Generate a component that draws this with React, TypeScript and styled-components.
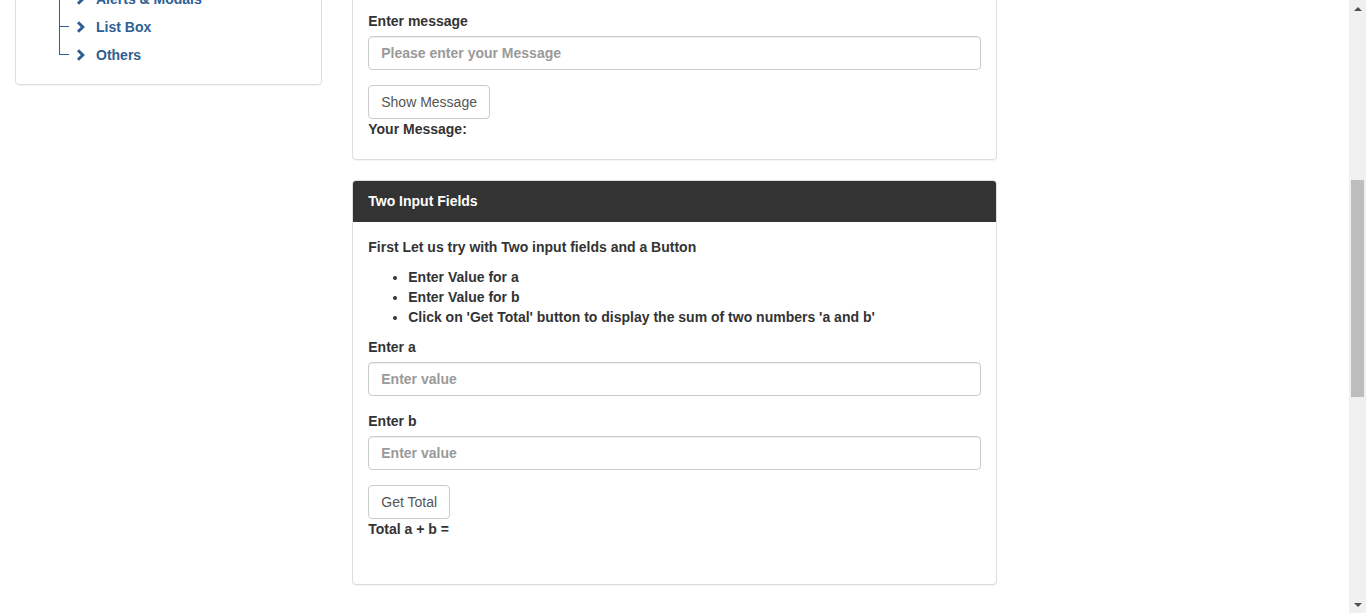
import React from "react";
import styled, { createGlobalStyle } from "styled-components";

const GlobalStyle = createGlobalStyle`
  html, body { margin: 0; padding: 0; background: #fff; }
  body {
    font-family: "Liberation Sans", Arial, sans-serif;
    font-size: 14px;
    line-height: 20px;
    color: #333;
  }
  * { box-sizing: border-box; }
`;

const Screen = styled.div`
  display: flex;
  width: 1366px;
  height: 613px;
  overflow: hidden;
`;

const Viewport = styled.div`
  flex: 1;
  overflow: hidden;
`;

const Content = styled.div<{ $offset: number }>`
  display: flex;
  align-items: flex-start;
  margin-top: ${(p) => -p.$offset}px;
`;

const Column = styled.div<{ $width: string }>`
  width: ${(p) => p.$width};
  padding: 0 15px;
`;

/* ---------- Sidebar ---------- */
const SideCard = styled.div`
  border: 1px solid #ddd;
  border-radius: 4px;
  box-shadow: 0 1px 1px rgba(0, 0, 0, 0.05);
  padding: 2px 15px 15px;
`;

const Tree = styled.ul`
  list-style: none;
  margin: 0 0 0 28px;
  padding: 0;
`;

const TreeItem = styled.li`
  display: flex;
  align-items: center;
  height: 28px;
`;

const Connector = styled.span`
  display: flex;
  flex-direction: column;
  width: 10px;
  height: 28px;
  margin-right: 7px;
`;

const ConnTop = styled.span`
  height: 14px;
  border-left: 1px solid #2e5e93;
  border-bottom: 1px solid #2e5e93;
`;

const ConnBottom = styled.span<{ $last: boolean }>`
  flex: 1;
  border-left: 1px solid ${(p) => (p.$last ? "transparent" : "#2e5e93")};
`;

const TreeLink = styled.a`
  display: flex;
  align-items: center;
  gap: 10px;
  color: #2e5e93;
  font-weight: bold;
  text-decoration: none;
`;

const Chevron = styled.svg`
  width: 10px;
  height: 12px;
  flex: none;
`;

/* ---------- Panels ---------- */
const Panel = styled.div`
  border: 1px solid #ddd;
  border-radius: 4px;
  box-shadow: 0 1px 1px rgba(0, 0, 0, 0.05);
  margin-bottom: 20px;
  background: #fff;
  overflow: hidden;
`;

const PanelHeading = styled.div`
  background: #333;
  color: #fff;
  font-weight: bold;
  padding: 10px 15px;
  border-bottom: 1px solid #333;
`;

const PanelBody = styled.div<{ $bottom: number }>`
  padding: 15px 15px ${(p) => p.$bottom}px;
`;

const Para = styled.p`
  margin: 0 0 10px;
  font-weight: bold;
`;

const List = styled.ul`
  margin: 0 0 10px;
  padding-left: 40px;
  font-weight: bold;
`;

const FormGroup = styled.div`
  margin-bottom: 15px;
`;

const Label = styled.label`
  display: block;
  font-weight: bold;
  margin-bottom: 5px;
`;

const Input = styled.input`
  display: block;
  width: 100%;
  height: 34px;
  padding: 6px 12px;
  font-family: "Liberation Sans", Arial, sans-serif;
  font-size: 14px;
  font-weight: bold;
  color: #555;
  border: 1px solid #ccc;
  border-radius: 4px;
  box-shadow: inset 0 1px 1px rgba(0, 0, 0, 0.075);
  &::placeholder { color: #9a9a9a; }
`;

const Button = styled.button`
  display: block;
  height: 34px;
  padding: 6px 12px;
  font-family: "Liberation Sans", Arial, sans-serif;
  font-size: 14px;
  line-height: 20px;
  color: #555;
  background: #fff;
  border: 1px solid #ccc;
  border-radius: 4px;
`;

const Result = styled.div`
  font-weight: bold;
`;

/* ---------- Scrollbar ---------- */
const ScrollBar = styled.div`
  width: 17px;
  height: 613px;
  background: #f0f0f0;
  display: flex;
  flex-direction: column;
`;

const Arrow = styled.div<{ $dir: "up" | "down" }>`
  height: 17px;
  display: flex;
  align-items: center;
  justify-content: center;
  &::after {
    content: "";
    width: 0;
    height: 0;
    border-left: 4px solid transparent;
    border-right: 4px solid transparent;
    ${(p) =>
      p.$dir === "up"
        ? "border-bottom: 4px solid #505050;"
        : "border-top: 4px solid #505050;"}
  }
`;

const Track = styled.div<{ $top: number }>`
  flex: 1;
  padding: ${(p) => p.$top}px 2px 0;
`;

const Thumb = styled.div<{ $size: number }>`
  height: ${(p) => p.$size}px;
  background: #bdbdbd;
`;

const menu = ["Progress Bars & Sliders", "Alerts & Modals", "List Box", "Others"];

export default function App() {
  return (
    <>
      <GlobalStyle />
      <Screen>
        <Viewport>
          <Content $offset={46}>
            <Column $width="25%">
              <SideCard>
                <Tree>
                  {menu.map((m, i) => (
                    <TreeItem key={m}>
                      <Connector>
                        <ConnTop />
                        <ConnBottom $last={i === menu.length - 1} />
                      </Connector>
                      <TreeLink href="#">
                        <Chevron viewBox="0 0 10 12">
                          <path
                            d="M2 1.3 L6.8 6 L2 10.7"
                            fill="none"
                            stroke="#2e5e93"
                            strokeWidth="3"
                          />
                        </Chevron>
                        {m}
                      </TreeLink>
                    </TreeItem>
                  ))}
                </Tree>
              </SideCard>
            </Column>
            <Column $width="50%">
              <Panel>
                <PanelHeading>Single Input Field</PanelHeading>
                <PanelBody $bottom={20}>
                  <FormGroup>
                    <Label>Enter message</Label>
                    <Input placeholder="Please enter your Message" />
                  </FormGroup>
                  <Button>Show Message</Button>
                  <Result>Your Message: </Result>
                </PanelBody>
              </Panel>
              <Panel>
                <PanelHeading>Two Input Fields</PanelHeading>
                <PanelBody $bottom={45}>
                  <Para>First Let us try with Two input fields and a Button</Para>
                  <List>
                    <li>Enter Value for a</li>
                    <li>Enter Value for b</li>
                    <li>Click on 'Get Total' button to display the sum of two numbers 'a and b'</li>
                  </List>
                  <FormGroup>
                    <Label>Enter a</Label>
                    <Input placeholder="Enter value" />
                  </FormGroup>
                  <FormGroup>
                    <Label>Enter b</Label>
                    <Input placeholder="Enter value" />
                  </FormGroup>
                  <Button>Get Total</Button>
                  <Result>Total a + b = </Result>
                </PanelBody>
              </Panel>
            </Column>
            <Column $width="25%" />
          </Content>
        </Viewport>
        <ScrollBar>
          <Arrow $dir="up" />
          <Track $top={163}>
            <Thumb $size={217} />
          </Track>
          <Arrow $dir="down" />
        </ScrollBar>
      </Screen>
    </>
  );
}
